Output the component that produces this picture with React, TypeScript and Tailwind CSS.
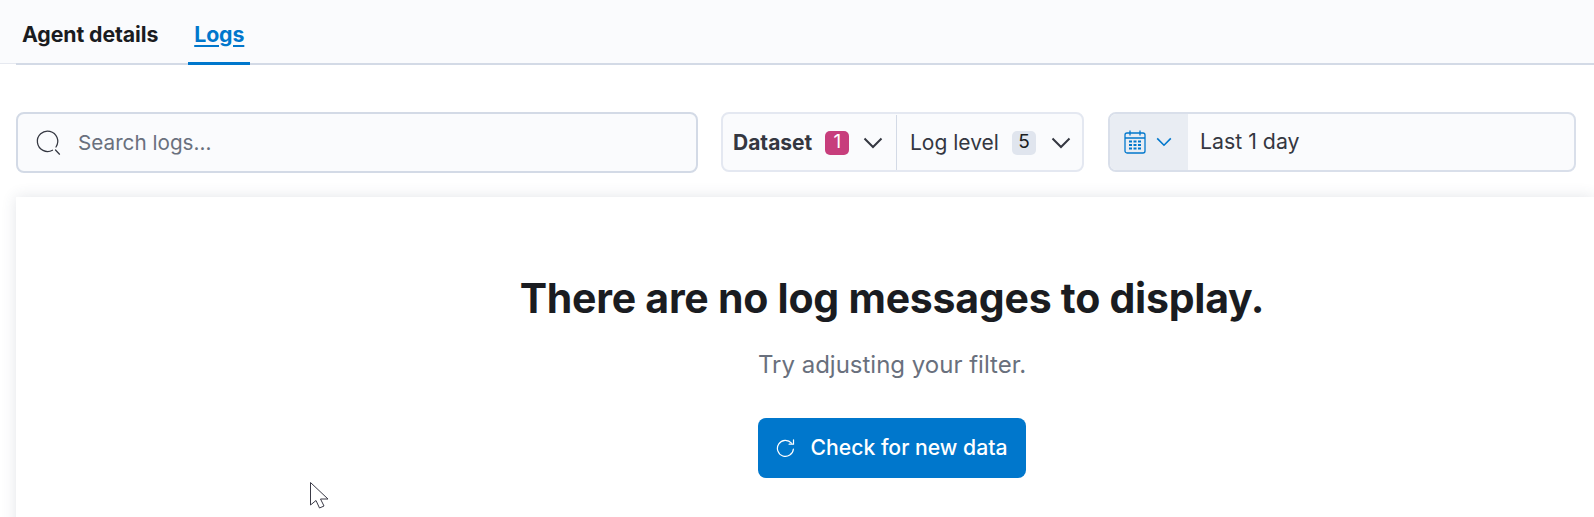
import React from 'react';

function SearchIcon() {
  return (
    <svg width="28" height="28" viewBox="0 0 28 28" fill="none" stroke="#343741" strokeWidth="1.25" className="shrink-0">
      <path d="M17.5 21.2A10.2 10.2 0 1 1 21 18" strokeLinecap="round" />
      <path d="M20.5 21l4 4.2" strokeLinecap="round" />
    </svg>
  );
}

function Chevron({ color = '#343741', size = 20 }: { color?: string; size?: number }) {
  return (
    <svg width={size} height="12" viewBox="0 0 20 12" fill="none" stroke={color} strokeWidth="2" className="shrink-0">
      <path d="M1.5 1.5L10 10l8.5-8.5" />
    </svg>
  );
}

function CalendarIcon() {
  return (
    <svg width="22" height="24" viewBox="0 0 22 24" fill="none" stroke="#0077cc" strokeWidth="1.3" className="shrink-0">
      <rect x="1" y="3" width="20" height="20" rx="2" />
      <path d="M1 8h20M6 0.5v5M16 0.5v5" />
      <path
        d="M5 11.5h3M9.5 11.5h3M14 11.5h3M5 15h3M9.5 15h3M14 15h3M5 18.5h3M9.5 18.5h3M14 18.5h3"
        strokeWidth="2"
      />
    </svg>
  );
}

function RefreshIcon() {
  return (
    <svg width="19" height="19" viewBox="0 0 19 19" fill="none" stroke="#ffffff" strokeWidth="1.2" className="shrink-0">
      <path d="M15.5 4.2A8 8 0 1 0 17.4 10" strokeLinecap="round" />
      <path d="M17.5 0.8v4.4h-4.4" strokeLinecap="round" />
    </svg>
  );
}

function CursorIcon() {
  return (
    <svg
      width="20"
      height="30"
      viewBox="0 0 20 30"
      fill="#ffffff"
      stroke="#3a3a46"
      strokeWidth="1"
      className="absolute left-[309px] top-[481px]"
    >
      <path d="M1.5 1.5V24l5.5-4.5 3.5 7.5 4.5-2-3.5-7h7.5z" />
    </svg>
  );
}

export default function App() {
  return (
    <div
      className="relative h-[517px] overflow-hidden bg-white"
      style={{ fontFamily: 'Inter, "Liberation Sans", sans-serif' }}
    >
      {/* Tabs */}
      <div className="h-[64px] border-b border-[#e6e9f0] bg-[#fafbfd]">
        <div className="ml-4 flex h-[65px] items-start border-b-2 border-[#d3dae6]">
          <button className="flex h-[65px] items-center px-[6px] pt-[5px] text-[21.3px] font-bold tracking-[-0.1px] text-[#1a1c21]">
            Agent details
          </button>
          <button className="ml-[24px] flex h-[65px] items-center border-b-[3px] border-[#0077cc] px-[6px] pt-[7px] text-[21.3px] font-bold tracking-[-0.1px] text-[#0077cc] underline underline-offset-[3px]">
            Logs
          </button>
        </div>
      </div>

      {/* Filters */}
      <div className="mt-[48px] flex gap-6 pl-4 pr-[18px]">
        <div className="flex h-[61px] w-[682px] items-center gap-[15px] rounded-[8px] border-2 border-[#d3dae6] bg-[#fafbfd] pl-[17px]">
          <SearchIcon />
          <span className="text-[20.7px] text-[#69707d]">Search logs...</span>
        </div>

        <div className="-ml-px flex h-[60px] w-[363px] items-stretch rounded-[8px] border-2 border-[#e4e8f1] bg-[#fafbfd] pt-px text-[#343741]">
          <div className="flex w-[174px] items-center border-r border-[#d3dae6] pl-[10px]">
            <span className="text-[21px] font-bold">Dataset</span>
            <span className="ml-[13px] flex h-6 w-6 items-center justify-center rounded-[5px] bg-[#c73e7c] text-[19px] text-white">
              1
            </span>
            <span className="ml-[14px]">
              <Chevron />
            </span>
          </div>
          <div className="flex flex-1 items-center pl-[13px]">
            <span className="text-[21px]">Log level</span>
            <span className="ml-[13px] flex h-6 w-6 items-center justify-center rounded-[5px] bg-[#e0e5ee] text-[19px] text-[#1a1c21]">
              5
            </span>
            <span className="ml-[15px]">
              <Chevron />
            </span>
          </div>
        </div>

        <div className="flex h-[60px] flex-1 items-stretch overflow-hidden rounded-[8px] border-2 border-[#d9dfea] bg-[#fafbfd]">
          <div className="flex w-[78px] items-center gap-[10px] bg-[#e9edf3] pl-[14px]">
            <CalendarIcon />
            <Chevron color="#0077cc" size={16} />
          </div>
          <div className="flex items-center pl-[12px] text-[21.3px] text-[#343741]">Last 1 day</div>
        </div>
      </div>

      {/* Empty state */}
      <div className="ml-4 mt-[24px] flex h-[400px] flex-col items-center bg-white pl-[174px] pt-[73px] shadow-[0_0_14px_rgba(60,70,100,0.14)]">
        <h2 className="text-[41px] leading-[56px] font-bold tracking-[-0.25px] text-[#1a1c21]">
          There are no log messages to display.
        </h2>
        <p className="mt-[23px] text-[24px] leading-[32px] text-[#69707d]">Try adjusting your filter.</p>
        <button className="mt-[37px] flex h-[60px] w-[268px] items-center justify-center gap-[15px] rounded-[8px] bg-[#0077cc] text-[21.2px] font-medium text-white">
          <RefreshIcon />
          Check for new data
        </button>
      </div>

      <CursorIcon />
    </div>
  );
}
